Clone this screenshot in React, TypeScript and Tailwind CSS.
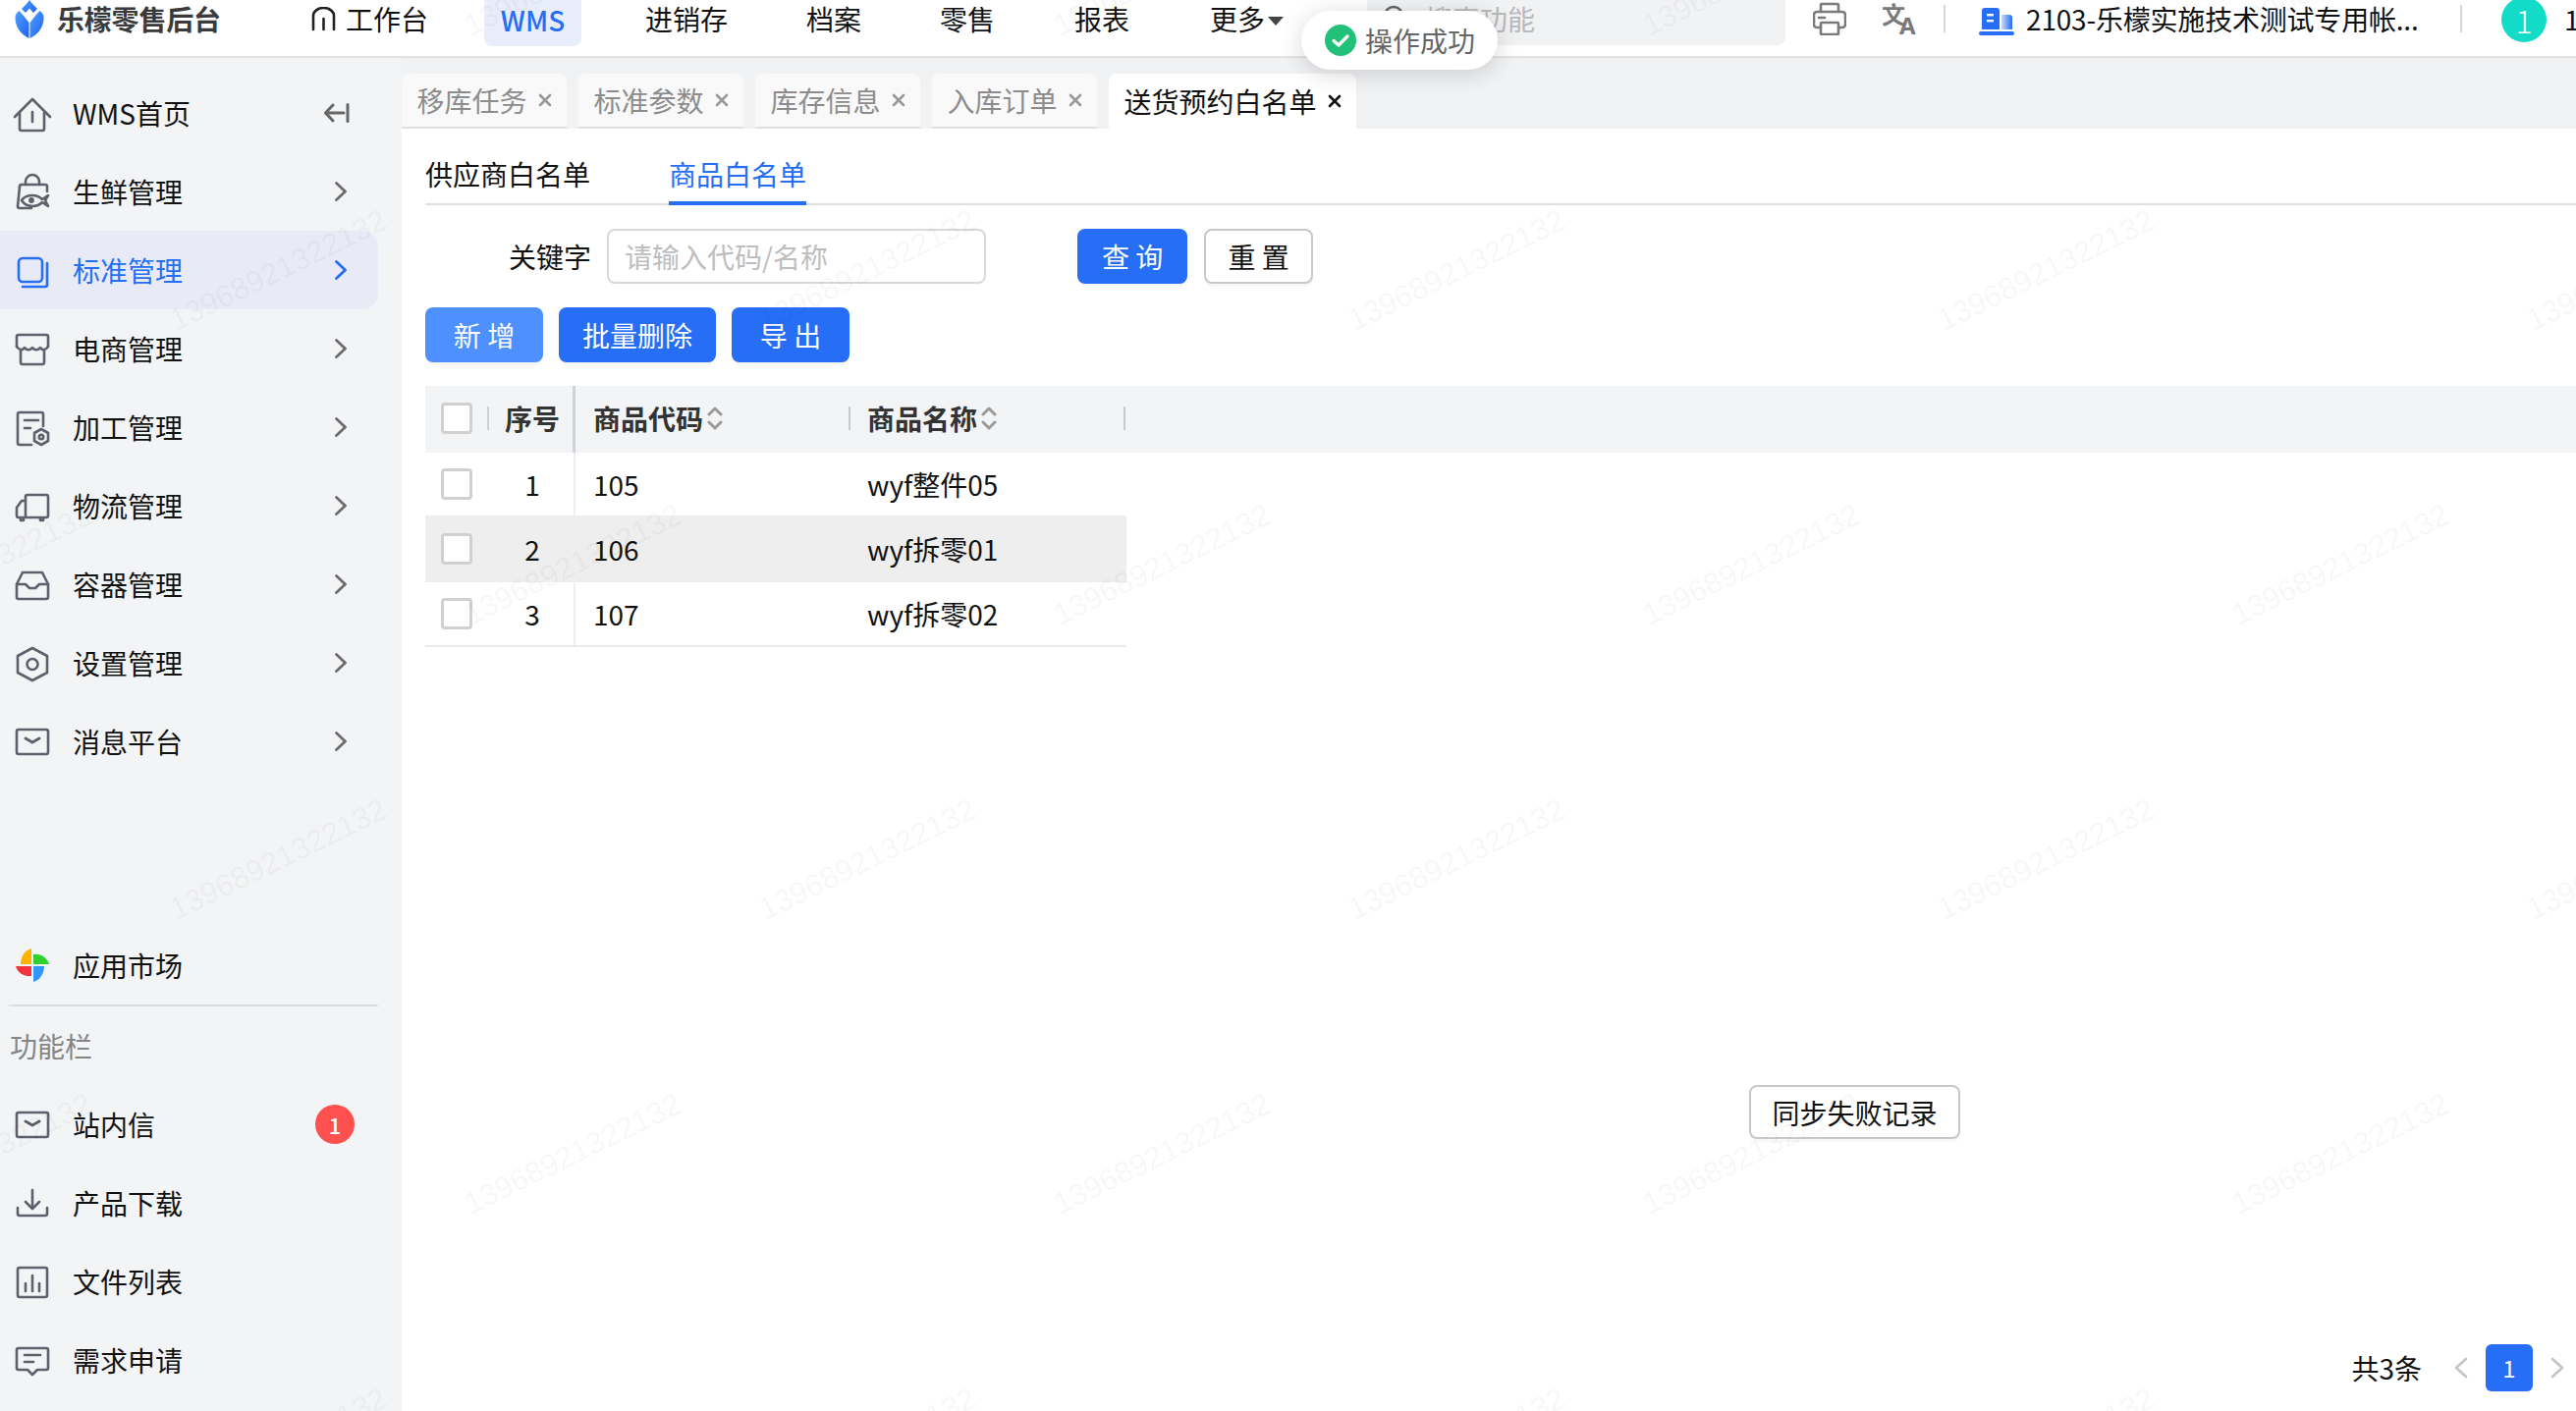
import type { ReactNode } from "react";

const ICON = "#5f606c";
const BLUE = "#256ef5";

const Svg = ({ children, color = ICON }: { children: ReactNode; color?: string }) => (
  <svg
    className="w-10 h-10 shrink-0"
    viewBox="0 0 40 40"
    fill="none"
    stroke={color}
    strokeWidth="2.6"
    strokeLinecap="round"
    strokeLinejoin="round"
  >
    {children}
  </svg>
);

const HomeIcon = () => (
  <Svg>
    <path d="M2 24 L20 6 L38 24" />
    <path d="M7 20 V36 a2 2 0 0 0 2 2 H30 a2 2 0 0 0 2-2 V20" />
    <path d="M20 19 V29" />
  </Svg>
);

const FishIcon = () => (
  <Svg>
    <path d="M9 13 H33 a2 2 0 0 1 2 2 V20" />
    <path d="M9 13 a2 2 0 0 0-2 2 L5 35 a2 2 0 0 0 2 2 H19" />
    <path d="M13 13 V10 a7 7 0 0 1 14 0 V13" />
    <path d="M9 29 C13 23 24 22 30 28 L36 24 L33 29 L36 35 L30 31 C24 37 13 36 9 29 Z" />
    <circle cx="19" cy="29" r="1.6" fill={ICON} />
  </Svg>
);

const CopyIcon = () => (
  <Svg color={BLUE}>
    <rect x="6" y="8" width="24" height="24" rx="4" />
    <path d="M35 13 V35 a2 2 0 0 1-2 2 H10" />
  </Svg>
);

const StoreIcon = () => (
  <Svg>
    <path d="M4 18 V8 a2 2 0 0 1 2-2 H34 a2 2 0 0 1 2 2 V18" />
    <path d="M4 18 c3 4 6 4 8 1 c2 3 6 3 8 0 c2 3 6 3 8 0 c2 3 5 3 8-1" />
    <path d="M8 22 V34 a2 2 0 0 0 2 2 H30 a2 2 0 0 0 2-2 V22" />
  </Svg>
);

const ProcessIcon = () => (
  <Svg>
    <path d="M19 38 H7 a2 2 0 0 1-2-2 V7 a2 2 0 0 1 2-2 H29 a2 2 0 0 1 2 2 V19" />
    <path d="M12 13 H26" />
    <path d="M12 21 H18" />
    <path d="M29 22 L36 26 V34 L29 38 L22 34 V26 Z" />
    <circle cx="29" cy="30" r="2.2" />
  </Svg>
);

const TruckIcon = () => (
  <Svg>
    <path d="M13 32 V11 a2 2 0 0 1 2-2 H34 a2 2 0 0 1 2 2 V30 a2 2 0 0 1-2 2 H6 a2 2 0 0 1-2-2 V22 L9 15 H13" />
    <path d="M8 33 V35 H11 V33" />
    <path d="M28 33 V35 H31 V33" />
  </Svg>
);

const TrayIcon = () => (
  <Svg>
    <path d="M10 8 H30 L36 20 V33 a2 2 0 0 1-2 2 H6 a2 2 0 0 1-2-2 V20 Z" />
    <path d="M4 20 H13 L17 24 H23 L27 20 H36" />
  </Svg>
);

const HexIcon = () => (
  <Svg>
    <path d="M20 5 L35 13 V30 L20 38 L5 30 V13 Z" />
    <circle cx="20" cy="21.5" r="5.5" />
  </Svg>
);

const MailIcon = () => (
  <Svg>
    <rect x="4" y="8" width="32" height="25" rx="2" />
    <path d="M13 17 L20 21 L27 17" strokeWidth="3" />
  </Svg>
);

const DownloadIcon = () => (
  <Svg>
    <path d="M20 7 V25" />
    <path d="M13 19 L20 26 L27 19" />
    <path d="M5 25 V31 a2 2 0 0 0 2 2 H33 a2 2 0 0 0 2-2 V25" />
  </Svg>
);

const ChartIcon = () => (
  <Svg>
    <rect x="5" y="6" width="30" height="30" rx="2" />
    <path d="M13 30 V22" />
    <path d="M20 30 V14" />
    <path d="M27 30 V22" />
  </Svg>
);

const ChatIcon = () => (
  <Svg>
    <path d="M6 8 H34 a2 2 0 0 1 2 2 V28 a2 2 0 0 1-2 2 H25 L20 35 L15 30 H6 a2 2 0 0 1-2-2 V10 a2 2 0 0 1 2-2 Z" />
    <path d="M12 15 H28" />
    <path d="M12 22 H21" />
  </Svg>
);

const FanIcon = () => (
  <svg className="w-10 h-10 shrink-0" viewBox="0 0 40 40">
    <path d="M19 3 C12 5 8 11 8 19 H19 Z" fill="#fdb300" />
    <path d="M21 9 C28 8 35 12 37 19 H21 Z" fill="#30d030" />
    <path d="M3 21 H19 V31 C12 32 5 28 3 21 Z" fill="#f5333f" />
    <path d="M21 21 H32 C32 28 28 35 21 37 Z" fill="#3296fa" />
  </svg>
);

const Chevron = ({ color = "#6b6b6b" }: { color?: string }) => (
  <svg className="w-3 h-5" viewBox="0 0 12 20" fill="none" stroke={color} strokeWidth="2.8" strokeLinecap="round" strokeLinejoin="round">
    <path d="M1.5 1.5 L10.5 10 L1.5 18.5" />
  </svg>
);

const Close = ({ color = "#999" }: { color?: string }) => (
  <svg className="w-[14px] h-[14px] shrink-0" viewBox="0 0 14 14" fill="none" stroke={color} strokeWidth="2.6" strokeLinecap="round">
    <path d="M2 2 L12 12" />
    <path d="M12 2 L2 12" />
  </svg>
);

const Sort = () => (
  <svg className="w-4 h-[26px] ml-1" viewBox="0 0 16 26" fill="none" stroke="#9a9a9a" strokeWidth="3" strokeLinecap="round" strokeLinejoin="round">
    <path d="M2 9 L8 3 L14 9" />
    <path d="M2 17 L8 23 L14 17" />
  </svg>
);

const Logo = () => (
  <svg className="w-[30px] h-[39px] shrink-0" viewBox="0 0 30 39">
    <defs>
      <linearGradient id="logoBlue" x1="0" y1="0" x2="1" y2="1">
        <stop offset="0" stopColor="#4fa0ff" />
        <stop offset="1" stopColor="#1f62ee" />
      </linearGradient>
    </defs>
    <path d="M15 0 C17 3 20 6 23 9 L19 13 L15 8.5 L11 13 L7 9 C10 6 13 3 15 0 Z" fill="url(#logoBlue)" />
    <path d="M4.5 11 L9 16 L14.5 23 V39 C6 35 0 27 0.5 17 C0.5 15 2 13 4.5 11 Z" fill="url(#logoBlue)" />
    <path d="M25.5 11 L21 16 L15.5 23 V39 C24 35 30 27 29.5 17 C29.5 15 28 13 25.5 11 Z" fill="url(#logoBlue)" />
  </svg>
);

const PrintIcon = () => (
  <svg className="w-[34px] h-[34px]" viewBox="0 0 34 34" fill="none" stroke="#7a7a7a" strokeWidth="2.6" strokeLinecap="round" strokeLinejoin="round">
    <path d="M8 10 V3 a1 1 0 0 1 1-1 H25 a1 1 0 0 1 1 1 V10" />
    <path d="M8 26 H4 a3 3 0 0 1-3-3 V13 a3 3 0 0 1 3-3 H30 a3 3 0 0 1 3 3 V23 a3 3 0 0 1-3 3 H26" />
    <rect x="8" y="21" width="18" height="12" rx="1" />
    <path d="M6 16 H12" />
  </svg>
);

const TranslateIcon = () => (
  <svg className="w-9 h-8" viewBox="0 0 36 32" fill="#7a7a7a">
    <text x="-1" y="21" fontSize="24" fontWeight="700" fontFamily="'Noto Sans CJK SC', sans-serif">文</text>
    <text x="17" y="32" fontSize="24" fontWeight="700" fontFamily="'Noto Sans', sans-serif">A</text>
  </svg>
);

const BuildingIcon = () => (
  <svg className="w-9 h-7" viewBox="0 0 36 28">
    <defs>
      <linearGradient id="side" x1="0" y1="0" x2="1" y2="0">
        <stop offset="0" stopColor="#c9d9fb" />
        <stop offset="1" stopColor="#256ef5" />
      </linearGradient>
    </defs>
    <path d="M3 3 a3 3 0 0 1 3-3 H18 a3 3 0 0 1 3 3 V22 H3 Z" fill={BLUE} />
    <path d="M23 7 H31 a3 3 0 0 1 3 3 V22 H23 Z" fill="url(#side)" />
    <rect x="8" y="6" width="7" height="2.4" fill="#fff" />
    <rect x="8" y="12" width="7" height="2.4" fill="#fff" />
    <rect x="0" y="24" width="36" height="4" rx="2" fill={BLUE} />
  </svg>
);

const CollapseIcon = () => (
  <svg className="w-[26px] h-5" viewBox="0 0 26 20" fill="none" stroke="#666" strokeWidth="3" strokeLinecap="round" strokeLinejoin="round">
    <path d="M24 1.5 V18.5" />
    <path d="M20 10 H2" />
    <path d="M9 2 L1.5 10 L9 18" />
  </svg>
);

const PageArrow = ({ dir }: { dir: "left" | "right" }) => (
  <svg className="block w-[14px] h-6" viewBox="0 0 14 24" fill="none" stroke="#c4c4c4" strokeWidth="2.6" strokeLinecap="round" strokeLinejoin="round">
    <path d={dir === "left" ? "M12 3 L2 12 L12 21" : "M2 3 L12 12 L2 21"} />
  </svg>
);

const topMenu = [
  { label: "进销存", ml: "ml-[65px]" },
  { label: "档案", ml: "ml-[80px]" },
  { label: "零售", ml: "ml-[80px]" },
  { label: "报表", ml: "ml-[81px]" },
  { label: "更多", ml: "ml-[82px]" },
];

const sideMain = [
  { label: "生鲜管理", icon: <FishIcon /> },
  { label: "标准管理", icon: <CopyIcon />, active: true },
  { label: "电商管理", icon: <StoreIcon /> },
  { label: "加工管理", icon: <ProcessIcon /> },
  { label: "物流管理", icon: <TruckIcon /> },
  { label: "容器管理", icon: <TrayIcon /> },
  { label: "设置管理", icon: <HexIcon /> },
  { label: "消息平台", icon: <MailIcon /> },
];

const sideTools = [
  { label: "产品下载", icon: <DownloadIcon /> },
  { label: "文件列表", icon: <ChartIcon /> },
  { label: "需求申请", icon: <ChatIcon /> },
];

const tabs = ["移库任务", "标准参数", "库存信息", "入库订单"];

const rows = [
  { no: 1, code: "105", name: "wyf整件05", cls: "h-16" },
  { no: 2, code: "106", name: "wyf拆零01", cls: "h-[68px] bg-[#eeeeee]" },
  { no: 3, code: "107", name: "wyf拆零02", cls: "h-16" },
];

// staggered watermark tiles
const marks = [
  ...[-25, 575, 1175].flatMap((y) => [-15, 585, 1185, 1785, 2385].map((x) => ({ x, y }))),
  ...[275, 875, 1475].flatMap((y) => [285, 885, 1485, 2085, 2685].map((x) => ({ x, y }))),
];

const Checkbox = () => <span className="w-8 h-8 shrink-0 rounded-[4px] border-[3px] border-[#d0d0d0] bg-white" />;

const Btn = ({ children, className }: { children: ReactNode; className: string }) => (
  <button className={`h-14 rounded-lg text-[28px] leading-none shadow-[0_3px_0_rgba(0,0,0,0.03)] ${className}`}>{children}</button>
);

export default function App() {
  return (
    <div className="relative w-full h-screen overflow-hidden flex flex-col bg-white text-[28px] leading-10 text-[#111] font-['Noto_Sans_CJK_SC','Noto_Sans',sans-serif]">
      <header className="h-[59px] shrink-0 flex items-start border-b-2 border-[#e2e2e2] bg-white whitespace-nowrap leading-[38px]">
        <div className="ml-[15px] flex">
          <Logo />
          <span className="ml-[13px] w-[165px] font-bold text-[#3a3a3a] tracking-[-0.2px]">乐檬零售后台</span>
        </div>
        <div className="ml-[94px] flex items-center h-[38px]">
          <svg className="w-[25px] h-[25px]" viewBox="0 0 25 25" fill="none" stroke="#222" strokeWidth="2.6" strokeLinecap="round" strokeLinejoin="round">
            <path d="M2 23 V9 a10.5 8 0 0 1 21 0 V23" />
            <path d="M12.5 12 V23" />
          </svg>
          <span className="ml-[10px]">工作台</span>
        </div>
        <div className="ml-[57px] w-[99px] h-[47px] pb-[7px] flex items-center justify-center rounded-b-lg bg-[#e8edfb] text-[#256ef5] font-medium">WMS</div>
        {topMenu.map((m) => (
          <span key={m.label} className={m.ml}>{m.label}</span>
        ))}
        <span className="ml-[3px] mt-[17px] border-x-[8px] border-t-[9px] border-x-transparent border-t-[#444]" />
        <div className="ml-[85px] w-[426px] h-[46px] flex items-start pl-4 rounded-br-lg bg-[#f1f2f4] text-[#b9b9b9]">
          <svg className="w-6 h-6 mt-[5px] mr-[19px]" viewBox="0 0 24 24" fill="none" stroke="#666" strokeWidth="2.6">
            <circle cx="11" cy="11" r="9" />
            <path d="M18 18 L23 23" />
          </svg>
          <span>搜索功能</span>
        </div>
        <div className="ml-[28px] mt-[2px]"><PrintIcon /></div>
        <div className="ml-[37px] mt-[3px]"><TranslateIcon /></div>
        <span className="ml-[26px] mt-[5px] w-[2px] h-7 bg-[#d6d6d6]" />
        <div className="ml-[34px] mt-[8px]"><BuildingIcon /></div>
        <span className="ml-[12px] w-[400px] tracking-[-0.2px]">2103-乐檬实施技术测试专用帐...</span>
        <span className="ml-[42px] mt-[5px] w-[2px] h-7 bg-[#d6d6d6]" />
        <div className="ml-[40px] -mt-[3px] w-[46px] h-[46px] shrink-0 rounded-full bg-[#12dcc8] flex items-center justify-center text-white text-[32px] font-light">1</div>
        <span className="ml-[18px] w-3 overflow-hidden">1</span>
      </header>

      <div className="flex-1 min-h-0 flex">
        <aside className="w-[409px] shrink-0 flex flex-col pt-4 pb-3 bg-[#f3f4f6]">
          <div className="h-20 flex items-center pl-[13px] pr-[53px]">
            <HomeIcon />
            <span className="ml-[21px] flex-1">WMS首页</span>
            <CollapseIcon />
          </div>
          {sideMain.map((s) => (
            <div
              key={s.label}
              className={`w-[385px] h-20 flex items-center pl-[13px] pr-[32px] rounded-r-2xl ${s.active ? "bg-[#e8ebf5] text-[#256ef5]" : ""}`}
            >
              {s.icon}
              <span className="ml-[21px] flex-1">{s.label}</span>
              <Chevron color={s.active ? BLUE : undefined} />
            </div>
          ))}

          <div className="mt-auto h-20 flex items-center pl-[13px]">
            <FanIcon />
            <span className="ml-[21px]">应用市场</span>
          </div>
          <div className="ml-[9px] w-[376px] h-[2px] bg-[#dcdde0]" />
          <div className="mt-5 mb-5 pl-[10px] text-[#858585]">功能栏</div>
          <div className="w-[385px] h-20 flex items-center pl-[13px] pr-[24px]">
            <MailIcon />
            <span className="ml-[21px] flex-1">站内信</span>
            <span className="w-10 h-10 rounded-full bg-[#ff5050] flex items-center justify-center text-white text-[22px] font-medium">1</span>
          </div>
          {sideTools.map((s) => (
            <div key={s.label} className="h-20 flex items-center pl-[13px]">
              {s.icon}
              <span className="ml-[21px]">{s.label}</span>
            </div>
          ))}
        </aside>

        <main className="relative flex-1 min-w-0 flex flex-col bg-white">
          <div className="h-[72px] shrink-0 pt-4 flex gap-3 bg-[#f1f2f4]">
            {tabs.map((t) => (
              <div key={t} className="h-14 w-[168px] flex items-center justify-center gap-[11px] rounded-t-lg border-b-2 border-[#e0e0e0] bg-[#f9f9f9] text-[#8c8c8c]">
                {t}
                <Close />
              </div>
            ))}
            <div className="h-14 w-[252px] flex items-center justify-center gap-[11px] rounded-t-lg bg-white">
              送货预约白名单
              <Close color="#111" />
            </div>
          </div>

          <div className="flex-1 min-h-0 flex flex-col pl-6">
            <div className="h-[78px] shrink-0 flex border-b-2 border-[#dedede] pt-[26px]">
              <span>供应商白名单</span>
              <span className="ml-20 h-[52px] border-b-4 border-[#256ef5] text-[#256ef5]">商品白名单</span>
            </div>

            <div className="mt-6 flex items-center">
              <span className="ml-[85px]">关键字</span>
              <div className="ml-4 w-[386px] h-14 flex items-center pl-4 rounded-lg border-2 border-[#d9d9d9] text-[#bdbdbd]">请输入代码/名称</div>
              <Btn className="ml-[93px] w-28 bg-[#256ef5] text-white">查 询</Btn>
              <Btn className="ml-[17px] w-[111px] border-2 border-[#c8c8c8] bg-white">重 置</Btn>
            </div>

            <div className="mt-6 flex gap-4">
              <Btn className="w-[120px] bg-[#4d90fe] text-white">新 增</Btn>
              <Btn className="w-40 bg-[#256ef5] text-white">批量删除</Btn>
              <Btn className="w-[120px] bg-[#256ef5] text-white">导 出</Btn>
            </div>

            <div className="mt-6 h-[68px] shrink-0 flex items-center pb-[2px] bg-[#f3f4f6] font-bold text-[#333]">
              <div className="w-[153px] h-[68px] -mb-[2px] shrink-0 flex items-center border-r-[3px] border-[#cfd2da] pl-4 pb-[2px]">
                <Checkbox />
                <span className="ml-[15px] w-[2px] h-6 bg-[#d0d0d0]" />
                <span className="ml-[16px]">序号</span>
              </div>
              <div className="w-[280px] h-6 shrink-0 flex items-center border-r-2 border-[#c9c9c9] pl-[18px]">
                商品代码
                <Sort />
              </div>
              <div className="w-[280px] h-6 shrink-0 flex items-center border-r-2 border-[#c9c9c9] pl-[17px]">
                商品名称
                <Sort />
              </div>
            </div>

            <div className="w-[714px] border-b-2 border-[#eaeaea]">
              {rows.map((r) => (
                <div key={r.no} className={`flex items-center ${r.cls}`}>
                  <div className="w-[153px] h-full shrink-0 flex items-center border-r-2 border-[#eeeeee] pl-4">
                    <Checkbox />
                    <span className="ml-[31px] w-[60px] text-center">{r.no}</span>
                  </div>
                  <div className="w-[280px] shrink-0 pl-[18px]">{r.code}</div>
                  <div className="w-[280px] shrink-0 pl-[17px]">{r.name}</div>
                </div>
              ))}
            </div>

            <div className="mt-auto mb-5 pr-3 flex items-center justify-end">
              <span>共3条</span>
              <span className="ml-[33px]"><PageArrow dir="left" /></span>
              <span className="ml-[18px] w-12 h-12 rounded-md bg-[#256ef5] flex items-center justify-center text-white text-[24px]">1</span>
              <span className="ml-[18px]"><PageArrow dir="right" /></span>
            </div>
          </div>

          <button className="absolute left-[1372px] top-[1046px] w-[215px] h-[55px] rounded-lg border-2 border-[#c8c8c8] bg-white shadow-[0_3px_0_rgba(0,0,0,0.03)]">同步失败记录</button>
        </main>
      </div>

      {/* toast */}
      <div className="absolute left-[1325px] top-[11px] z-20 w-[200px] h-[60px] flex items-center gap-[9px] pl-6 rounded-full bg-white shadow-[0_4px_24px_rgba(0,0,0,0.16)] text-[#666]">
        <svg className="w-8 h-8 shrink-0" viewBox="0 0 32 32">
          <circle cx="16" cy="16" r="16" fill="#22c17a" />
          <path d="M9 16.5 L14 21 L23 12" fill="none" stroke="#fff" strokeWidth="3.2" strokeLinecap="round" strokeLinejoin="round" />
        </svg>
        操作成功
      </div>

      {/* watermark */}
      <div className="absolute inset-0 z-10 pointer-events-none overflow-hidden">
        {marks.map((m) => (
          <span
            key={`${m.x}-${m.y}`}
            className="absolute -translate-x-1/2 -translate-y-1/2 -rotate-[26deg] text-[31px] leading-none text-black/[0.045] font-['Liberation_Sans',sans-serif]"
            style={{ left: m.x - 2, top: m.y }}
          >
            13968921322132
          </span>
        ))}
      </div>
    </div>
  );
}
